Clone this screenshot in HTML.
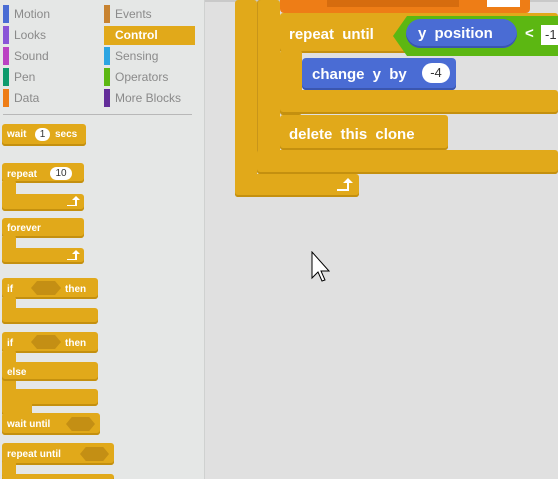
<!DOCTYPE html>
<html><head><style>
html,body{margin:0;width:558px;height:479px;overflow:hidden}
body{background:#e0e0e0;font-family:"Liberation Sans",sans-serif;position:relative}
.a{position:absolute}
#pal{left:0;top:0;width:204px;height:479px;background:#e5e7e6;border-right:1px solid #cfd1d0}
.cat{position:absolute;font-size:12px;color:#8a8a8a;height:18px;line-height:18px}
.cat i{position:absolute;left:0;top:0;width:6px;height:18px}
.cat span{position:absolute;left:11px;white-space:nowrap}
.y{background:#e1a91a;border-radius:3px;box-shadow:inset 0 -2px 0 #c4900f}
.t{color:#fff;font-weight:bold;font-size:10px;position:absolute;white-space:nowrap}
.T{color:#fff;font-weight:bold;font-size:15px;position:absolute;white-space:nowrap;word-spacing:4px}
.hex{position:absolute;background:#c48f14;clip-path:polygon(20% 0,80% 0,100% 50%,80% 100%,20% 100%,0 50%)}
.pill{position:absolute;background:#fff;border-radius:8px;color:#333;font-size:10px;text-align:center}
</style></head><body>
<div class="a" style="left:205px;top:0;width:353px;height:2px;background:#c9c9c9"></div>
<div id="pal" class="a">
<div class="cat" style="left:3px;top:5px"><i style="background:#4a6cd4"></i><span>Motion</span></div>
<div class="cat" style="left:3px;top:26px"><i style="background:#8a55d7"></i><span>Looks</span></div>
<div class="cat" style="left:3px;top:47px"><i style="background:#bb42c3"></i><span>Sound</span></div>
<div class="cat" style="left:3px;top:68px"><i style="background:#0e9a6c"></i><span>Pen</span></div>
<div class="cat" style="left:3px;top:89px"><i style="background:#ee7d16"></i><span>Data</span></div>
<div class="cat" style="left:104px;top:5px"><i style="background:#c88330"></i><span>Events</span></div>
<div class="a" style="left:104px;top:26px;width:91px;height:19px;background:#e1a91a"></div>
<div class="cat" style="left:104px;top:26px;color:#fff;font-weight:bold"><span>Control</span></div>
<div class="cat" style="left:104px;top:47px"><i style="background:#2ca5e2"></i><span>Sensing</span></div>
<div class="cat" style="left:104px;top:68px"><i style="background:#5cb712"></i><span>Operators</span></div>
<div class="cat" style="left:104px;top:89px"><i style="background:#632d99"></i><span>More Blocks</span></div>
<div class="a" style="left:3px;top:114px;width:189px;height:1px;background:#b8b8b8"></div>

<div class="a y" style="left:2px;top:124px;width:84px;height:22px"></div>
<div class="t" style="left:7px;top:129px">wait</div><div class="pill" style="left:35px;top:128px;width:15px;height:13px;line-height:13px">1</div><div class="t" style="left:55px;top:129px">secs</div>

<div class="a y" style="left:2px;top:163px;width:82px;height:20px"></div>
<div class="a y" style="left:2px;top:180px;width:14px;height:30px"></div>
<div class="a y" style="left:2px;top:194px;width:82px;height:17px"></div>
<div class="t" style="left:7px;top:169px">repeat</div><div class="pill" style="left:50px;top:167px;width:22px;height:13px;line-height:13px">10</div>
<svg class="a" style="left:66px;top:196px" width="14" height="11"><path d="M1 9 H9 V4 H6 L10 0 L14 4 H11 V10 H1 Z" fill="#fff"/></svg>

<div class="a y" style="left:2px;top:218px;width:82px;height:20px"></div>
<div class="a y" style="left:2px;top:235px;width:14px;height:28px"></div>
<div class="a y" style="left:2px;top:248px;width:82px;height:16px"></div>
<div class="t" style="left:7px;top:223px">forever</div>
<svg class="a" style="left:66px;top:250px" width="14" height="11"><path d="M1 9 H9 V4 H6 L10 0 L14 4 H11 V10 H1 Z" fill="#fff"/></svg>

<div class="a y" style="left:2px;top:278px;width:96px;height:21px"></div>
<div class="a y" style="left:2px;top:296px;width:14px;height:28px"></div>
<div class="a y" style="left:2px;top:308px;width:96px;height:16px"></div>
<div class="t" style="left:7px;top:284px">if</div><div class="hex" style="left:31px;top:281px;width:30px;height:14px"></div><div class="t" style="left:65px;top:284px">then</div>

<div class="a y" style="left:2px;top:332px;width:96px;height:21px"></div>
<div class="a y" style="left:2px;top:350px;width:14px;height:66px"></div>
<div class="a y" style="left:2px;top:362px;width:96px;height:19px"></div>
<div class="a y" style="left:2px;top:389px;width:96px;height:17px"></div>
<div class="a y" style="left:2px;top:400px;width:30px;height:16px"></div>
<div class="t" style="left:7px;top:338px">if</div><div class="hex" style="left:31px;top:335px;width:30px;height:14px"></div><div class="t" style="left:65px;top:338px">then</div>
<div class="t" style="left:7px;top:367px">else</div>

<div class="a y" style="left:2px;top:413px;width:98px;height:22px"></div>
<div class="t" style="left:7px;top:419px">wait until</div><div class="hex" style="left:66px;top:417px;width:29px;height:14px"></div>

<div class="a y" style="left:2px;top:443px;width:112px;height:22px"></div>
<div class="a y" style="left:2px;top:460px;width:14px;height:19px"></div>
<div class="a y" style="left:2px;top:474px;width:112px;height:8px"></div>
<div class="t" style="left:7px;top:449px">repeat until</div><div class="hex" style="left:80px;top:447px;width:29px;height:14px"></div>
</div>

<div class="a y" style="left:235px;top:0;width:22px;height:197px"></div>
<div class="a y" style="left:235px;top:174px;width:124px;height:23px"></div>
<svg class="a" style="left:336px;top:178px" width="18" height="14"><path d="M1 11 H11 V5 H7 L12 0 L17 5 H13 V13 H1 Z" fill="#fff"/></svg>
<div class="a y" style="left:257px;top:0;width:23px;height:174px;box-shadow:inset 1px 0 0 #c8951a"></div>
<div class="a y" style="left:257px;top:150px;width:301px;height:24px"></div>
<div class="a" style="left:280px;top:0;width:250px;height:13px;background:#ee7d16;border-radius:0 0 4px 4px"></div>
<div class="a" style="left:327px;top:0;width:132px;height:7px;background:#d66c0e"></div>
<div class="a" style="left:487px;top:0;width:33px;height:7px;background:#fff"></div>
<div class="a y" style="left:280px;top:13px;width:278px;height:40px"></div>
<div class="a y" style="left:280px;top:50px;width:22px;height:65px"></div>
<div class="a y" style="left:280px;top:90px;width:278px;height:24px"></div>
<div class="a y" style="left:280px;top:115px;width:168px;height:35px"></div>
<div class="T" style="left:289px;top:26px">repeat until</div>
<div class="a" style="left:393px;top:16px;width:170px;height:40px;background:#5cb712;clip-path:polygon(14px 0,100% 0,100% 100%,14px 100%,0 50%)"></div>
<div class="a" style="left:406px;top:19px;width:111px;height:29px;background:#4a6cd4;border-radius:15px;box-shadow:inset 0 -2px 0 #3a56b0"></div>
<div class="T" style="left:418px;top:25px">y position</div>
<div class="T" style="left:525px;top:25px">&lt;</div>
<div class="a" style="left:541px;top:25px;width:20px;height:20px;background:#fff"></div>
<div class="a" style="left:545px;top:27px;font-size:13px;color:#333">-1</div>
<div class="a" style="left:302px;top:58px;width:154px;height:32px;background:#4a6cd4;border-radius:4px;box-shadow:inset 0 -2px 0 #3a56b0"></div>
<div class="T" style="left:312px;top:66px">change y by</div>
<div class="a" style="left:422px;top:63px;width:28px;height:20px;background:#fff;border-radius:10px;color:#333;font-size:13px;text-align:center;line-height:20px">-4</div>
<div class="T" style="left:289px;top:126px">delete this clone</div>

<svg class="a" style="left:311px;top:251px" width="20" height="32" viewBox="0 0 20 32"><path d="M1 1 L1 27 L7 21 L11 30 L14 29 L10 20 L18 20 Z" fill="#fff" stroke="#000" stroke-width="1"/></svg>
</body></html>
